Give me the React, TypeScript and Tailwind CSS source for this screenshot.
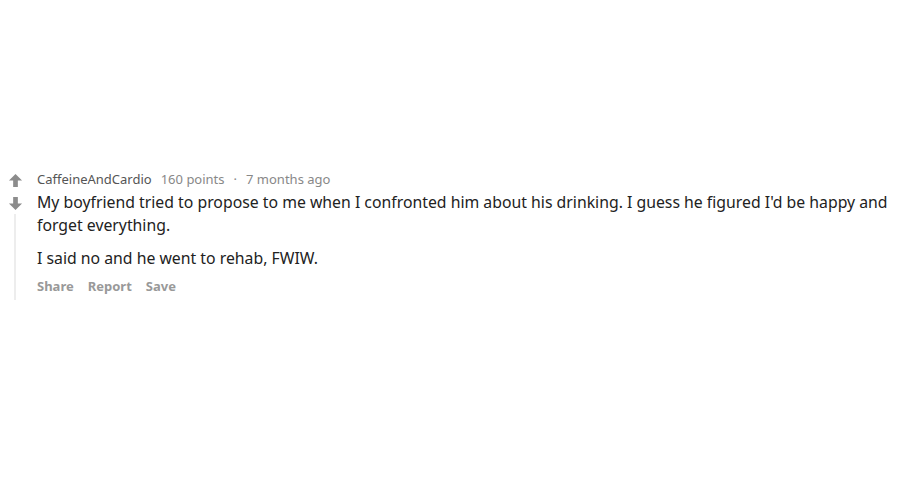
export default function App() {
  return (
    <div className="w-[900px] h-[480px] bg-white font-['Noto_Sans',sans-serif] pt-[170px]">
      <div className="flex pl-[6px]">
        {/* vote column */}
        <div className="flex flex-col items-center w-[18px]">
          <svg width="15" height="15" viewBox="0 0 16 16" className="mt-[3px]">
            <path d="M8 1 L15 8 H10.5 V15 H5.5 V8 H1 Z" fill="#8c8c8c" />
          </svg>
          <svg width="15" height="15" viewBox="0 0 16 16" className="mt-[8px]">
            <path d="M8 15 L15 8 H10.5 V1 H5.5 V8 H1 Z" fill="#8c8c8c" />
          </svg>
          <div className="w-[2px] bg-[#ededed] flex-1 mt-[3px]" />
        </div>
        <div className="pl-[13px] w-[870px]">
          <div className="flex items-center gap-[9px] text-[13px] leading-[18px] text-[#888]">
            <span className="text-[#555]">CaffeineAndCardio</span>
            <span>160 points</span>
            <span>·</span>
            <span>7 months ago</span>
          </div>
          <div className="text-[15.8px] leading-[23px] text-[#222] mt-[3px]">
            <p>My boyfriend tried to propose to me when I confronted him about his drinking. I guess he figured I'd be happy and forget everything.</p>
            <p className="mt-[10px]">I said no and he went to rehab, FWIW.</p>
          </div>
          <div className="flex gap-[14px] text-[13px] font-bold text-[#999] mt-[7px] pb-[5px] leading-[18px]">
            <span>Share</span>
            <span>Report</span>
            <span>Save</span>
          </div>
        </div>
      </div>
    </div>
  );
}
